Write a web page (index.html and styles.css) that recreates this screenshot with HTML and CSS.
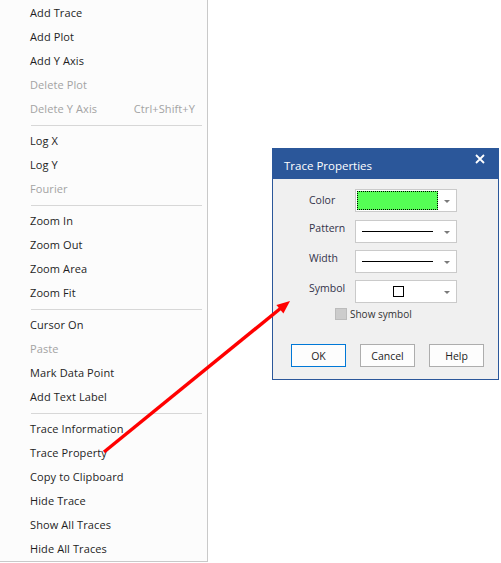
FILE: index.html
```html
<!DOCTYPE html>
<html lang="en">
<head>
    <meta charset="UTF-8">
    <meta name="viewport" content="width=device-width, initial-scale=1.0">
    <title>Trace Properties</title>
    <link rel="stylesheet" href="styles.css">
</head>
<body>
    <div class="screen">
        <!-- context menu of the plot -->
        <div class="menu">
            <div class="item">Add Trace</div>
            <div class="item">Add Plot</div>
            <div class="item">Add Y Axis</div>
            <div class="item disabled">Delete Plot</div>
            <div class="item disabled"><span>Delete Y Axis</span><span class="key">Ctrl+Shift+Y</span></div>
            <div class="sep"></div>
            <div class="item">Log X</div>
            <div class="item">Log Y</div>
            <div class="item disabled">Fourier</div>
            <div class="sep"></div>
            <div class="item">Zoom In</div>
            <div class="item">Zoom Out</div>
            <div class="item">Zoom Area</div>
            <div class="item">Zoom Fit</div>
            <div class="sep"></div>
            <div class="item">Cursor On</div>
            <div class="item disabled">Paste</div>
            <div class="item">Mark Data Point</div>
            <div class="item">Add Text Label</div>
            <div class="sep"></div>
            <div class="item">Trace Information</div>
            <div class="item">Trace Property</div>
            <div class="item">Copy to Clipboard</div>
            <div class="item">Hide Trace</div>
            <div class="item">Show All Traces</div>
            <div class="item">Hide All Traces</div>
        </div>

        <div class="desk">
            <!-- dialog window -->
            <div class="dialog">
                <div class="titlebar">
                    <span class="title">Trace Properties</span>
                    <svg class="close" width="10" height="10" viewBox="0 0 10 10">
                        <path d="M1 1 L9 9 M9 1 L1 9" stroke="#fff" stroke-width="1.8"/>
                    </svg>
                </div>
                <div class="body">
                    <div class="form">
                        <div class="row">
                            <span class="label mid">Color</span>
                            <div class="combo">
                                <div class="value"><div class="swatch"></div></div>
                                <div class="drop"></div>
                            </div>
                        </div>
                        <div class="row">
                            <span class="label">Pattern</span>
                            <div class="combo">
                                <div class="value"><div class="line"></div></div>
                                <div class="drop"></div>
                            </div>
                        </div>
                        <div class="row">
                            <span class="label">Width</span>
                            <div class="combo">
                                <div class="value"><div class="line"></div></div>
                                <div class="drop"></div>
                            </div>
                        </div>
                        <div class="row">
                            <span class="label">Symbol</span>
                            <div class="combo">
                                <div class="value centered"><div class="square"></div></div>
                                <div class="drop"></div>
                            </div>
                        </div>
                    </div>
                    <label class="check">
                        <span class="box"></span>
                        <span>Show symbol</span>
                    </label>
                    <div class="buttons">
                        <button class="btn default">OK</button>
                        <button class="btn">Cancel</button>
                        <button class="btn">Help</button>
                    </div>
                </div>
            </div>
        </div>

        <!-- red pointer from the menu entry to the dialog -->
        <svg class="pointer" width="501" height="563" viewBox="0 0 501 563">
            <line x1="104" y1="452" x2="281" y2="308" stroke="#ff0000" stroke-width="3.5"/>
            <polygon points="290,301 283.4,313.5 276.4,304.9" fill="#ff0000"/>
        </svg>
    </div>
</body>
</html>
```

FILE: styles.css
```css
* {
    margin: 0;
    padding: 0;
    box-sizing: border-box;
}

body {
    font-family: "Open Sans", "Noto Sans", sans-serif;
    font-size: 12px;
    background: #fff;
    color: #1e1e1e;
}

.screen {
    position: relative;
    display: flex;
    width: 501px;
    height: 563px;
    overflow: hidden;
}

/* 菜单 */
.menu {
    width: 208px;
    height: 562px;
    background: #fcfcfc;
    border-right: 1px solid #c9c9c9;
    border-bottom: 1px solid #c9c9c9;
    padding-top: 1px;
}

.item {
    height: 24px;
    display: flex;
    align-items: center;
    justify-content: space-between;
    padding: 0 12px 2px 30px;
    font-size: 11px;
    letter-spacing: 0.1px;
}

.item.disabled {
    color: #a3a3a3;
}

.sep {
    height: 8px;
    display: flex;
    align-items: center;
    padding: 0 5px 0 31px;
}

.sep::after {
    content: "";
    flex: 1;
    height: 1px;
    background: #d7d7d7;
}

/* 对话框区域 */
.desk {
    flex: 1;
    padding: 148px 0 0 64px;
}

.dialog {
    width: 227px;
    height: 232px;
    border: 1px solid #2b579a;
    background: #f0f0f0;
    display: flex;
    flex-direction: column;
}

.titlebar {
    height: 30px;
    background: #2b579a;
    color: #fff;
    display: flex;
    align-items: center;
    justify-content: space-between;
    padding: 3px 13px 0 11px;
}

.title {
    font-size: 11.5px;
}

.close {
    margin-top: -14px;
}

.body {
    flex: 1;
    padding: 10px 0 0 0;
}

.form {
    display: flex;
    flex-direction: column;
    gap: 7px;
}

.form .row:nth-child(2) {
    margin-top: 1px;
}

.row {
    display: flex;
    align-items: flex-start;
    height: 23px;
}

.label {
    width: 82px;
    padding-left: 36px;
    line-height: 16px;
    color: #33334a;
    font-size: 10.5px;
}

.label.mid {
    line-height: 23px;
}

.combo {
    width: 102px;
    height: 23px;
    background: #fff;
    border: 1px solid #cacaca;
    display: flex;
}

.value {
    flex: 1;
    display: flex;
    align-items: center;
    padding-left: 6px;
}

.value.centered {
    justify-content: center;
    padding-left: 2px;
}

.swatch {
    width: 81px;
    height: 19px;
    margin-left: -5px;
    background: #55ff55;
    border: 1px dotted #000;
}

.line {
    width: 71px;
    height: 1px;
    background: #000;
}

.square {
    width: 11px;
    height: 11px;
    border: 1px solid #000;
}

.drop {
    width: 18px;
    display: flex;
    align-items: center;
    justify-content: center;
}

.drop::after {
    content: "";
    border-left: 3px solid transparent;
    border-right: 3px solid transparent;
    border-top: 3px solid #7a7a7a;
    margin-top: 1px;
}

.check {
    display: flex;
    align-items: center;
    gap: 3px;
    margin: 5px 0 0 62px;
    color: #333;
    font-size: 10px;
    height: 12px;
}

.box {
    width: 12px;
    height: 12px;
    background: #cccccc;
    border: 1px solid #bcbcbc;
}

.buttons {
    display: flex;
    gap: 14px;
    margin: 24px 0 0 18px;
}

.btn {
    width: 55px;
    height: 23px;
    font-family: inherit;
    font-size: 10.5px;
    color: #1e1e1e;
    background: #fdfdfd;
    border: 1px solid #adadad;
}

.btn.default {
    border-color: #0078d7;
}

.pointer {
    position: absolute;
    left: 0;
    top: 0;
    pointer-events: none;
}
```
